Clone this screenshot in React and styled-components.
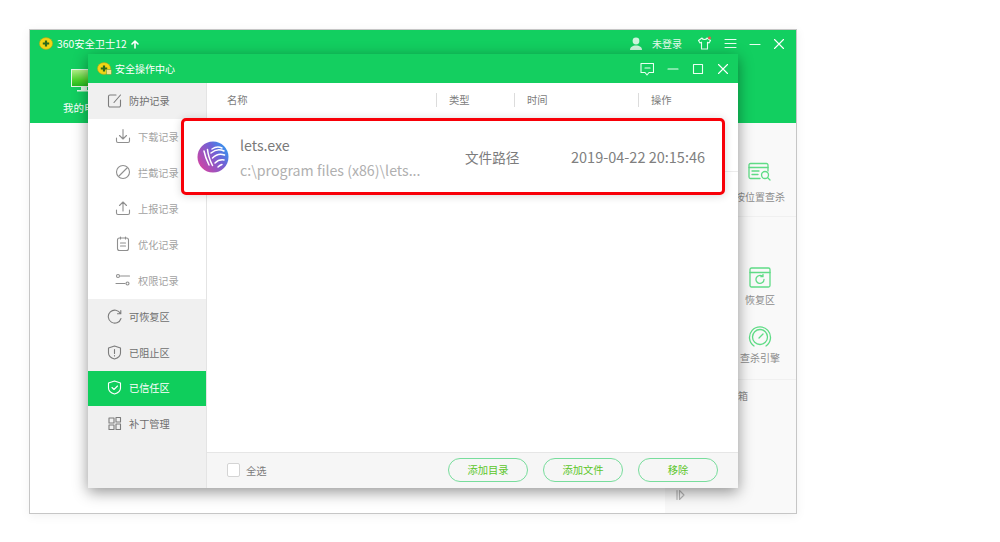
import styled, { createGlobalStyle } from "styled-components";

const GlobalStyle = createGlobalStyle`
  html, body {
    margin: 0;
    background: #fff;
    font-family: "Noto Sans CJK SC", "Noto Sans", sans-serif;
  }
`;

const Page = styled.div`
  width: 1000px;
  height: 542px;
  padding: 29px 0 0 29px;
  box-sizing: border-box;
  overflow: hidden;
`;

const Win = styled.div`
  position: relative;
  width: 768px;
  height: 485px;
  box-sizing: border-box;
  border: 1px solid #c6c6c6;
  background: #fff;
  display: flex;
  flex-direction: column;
  box-shadow: 0 2px 10px rgba(0, 0, 0, 0.06);
`;

const WinHeader = styled.header`
  height: 93px;
  flex: none;
  background: #12cf60;
  color: #fff;
  display: flex;
  flex-direction: column;
`;

const TitleRow = styled.div`
  height: 27px;
  display: flex;
  align-items: center;
  padding: 0 11px 0 9px;
  font-size: 10.3px;
`;

const AppName = styled.span`
  margin: 0 2px 0 3px;
`;

const Spacer = styled.div`
  flex: 1;
`;

const UserName = styled.span`
  margin: 0 15px 0 9px;
  font-size: 10px;
  color: #e6fbee;
`;

const WinTools = styled.div`
  display: flex;
  align-items: center;
  gap: 12px;
`;

const HomeTab = styled.div`
  width: 70px;
  margin: 12px 0 0 19px;
  display: flex;
  flex-direction: column;
  align-items: center;
  gap: 6px;
  font-size: 10.5px;
  line-height: 14px;
`;

const WinBody = styled.div`
  flex: 1;
  display: flex;
  justify-content: flex-end;
`;

const SidePanel = styled.aside`
  width: 131px;
  background: #f9f9f9;
  position: relative;
  display: flex;
  flex-direction: column;
  align-items: flex-end;
`;

const PanelGroup = styled.div`
  width: 100%;
  height: ${(p) => p.$height}px;
  box-sizing: border-box;
  padding: ${(p) => p.$top}px 11px 0 0;
  border-bottom: 1px solid #f0f0f0;
  display: flex;
  flex-direction: column;
  align-items: flex-end;
  gap: 18px;
`;

const PanelItem = styled.div`
  width: 50px;
  display: flex;
  flex-direction: column;
  align-items: center;
  gap: ${(p) => p.$gap}px;
  font-size: 10px;
  line-height: 14px;
  color: #8c8c8c;
  white-space: nowrap;
`;

const PanelExtra = styled.div`
  width: 100%;
  padding: 9px 0 0 73px;
  box-sizing: border-box;
  font-size: 10px;
  line-height: 14px;
  color: #8c8c8c;
`;

const ExpandMark = styled.div`
  margin-top: auto;
  width: 100%;
  height: 31px;
  padding-left: 10px;
  box-sizing: border-box;
`;

const Dialog = styled.section`
  position: absolute;
  left: 58px;
  top: 24px;
  width: 650px;
  height: 434px;
  display: flex;
  flex-direction: column;
  background: #fff;
  box-shadow: 0 4px 14px rgba(0, 0, 0, 0.42);
`;

const DialogTitle = styled.div`
  height: 29px;
  flex: none;
  background: #14cf60;
  color: #fff;
  font-size: 10px;
  display: flex;
  align-items: center;
  padding: 0 9px;
`;

const DialogName = styled.span`
  margin-left: 3px;
`;

const DialogTools = styled.div`
  display: flex;
  align-items: center;
  gap: 13px;
`;

const DialogBody = styled.div`
  flex: 1;
  display: flex;
  min-height: 0;
`;

const Sidebar = styled.nav`
  width: 119px;
  flex: none;
  background: #f0f0f0;
  border-right: 1px solid #e4e4e4;
  box-sizing: border-box;
  display: flex;
  flex-direction: column;
`;

const SubMenu = styled.div`
  background: #fff;
  display: flex;
  flex-direction: column;
`;

const NavRow = styled.div`
  height: ${(p) => p.$h || 36}px;
  flex: none;
  box-sizing: border-box;
  padding-bottom: 2px;
  display: flex;
  align-items: center;
  gap: 7px;
  padding-left: ${(p) => (p.$sub ? 27 : 19)}px;
  font-size: 10.2px;
  white-space: nowrap;
  background: ${(p) => (p.$active ? "#0fce5c" : "transparent")};
  color: ${(p) => (p.$active ? "#fff" : p.$sub ? "#a2a2a2" : "#6e6e6e")};
`;

const Content = styled.div`
  flex: 1;
  display: flex;
  flex-direction: column;
  min-width: 0;
`;

const TableHead = styled.div`
  height: 36px;
  flex: none;
  display: grid;
  grid-template-columns: 229px 78px 124px 1fr;
  align-items: center;
  font-size: 10.3px;
  color: #7c7c7c;
`;

const HeadCell = styled.div`
  height: 14px;
  line-height: 14px;
  padding-left: ${(p) => (p.$first ? 20 : 12)}px;
  border-left: ${(p) => (p.$first ? "none" : "1px solid #dcdcdc")};
  transform: translateY(-1px);
`;

const RowArea = styled.div`
  flex: 1;
  background: #fff;
`;

const RowLine = styled.div`
  height: 52px;
  border-bottom: 1px solid #ececec;
`;

const Footer = styled.footer`
  height: 36px;
  flex: none;
  background: #f6f6f6;
  border-top: 1px solid #e6e6e6;
  box-sizing: border-box;
  display: flex;
  align-items: center;
  padding: 0 20px 1px;
  gap: 15px;
`;

const SelectAll = styled.label`
  display: flex;
  align-items: center;
  gap: 6px;
  font-size: 10.3px;
  color: #7c7c7c;
  margin-right: auto;
`;

const Check = styled.span`
  width: 13px;
  height: 14px;
  box-sizing: border-box;
  background: #fff;
  border: 1px solid #d4d4d4;
  border-radius: 2px;
`;

const GreenButton = styled.button`
  width: 80px;
  height: 24px;
  padding: 0 0 2px;
  border: 1px solid #78dd9c;
  border-radius: 12px;
  background: transparent;
  color: #5cc62a;
  font: inherit;
  font-size: 10.3px;
`;

const Highlight = styled.div`
  position: absolute;
  left: 93px;
  top: 64px;
  width: 544px;
  height: 77px;
  box-sizing: border-box;
  border: 3px solid #f80008;
  border-radius: 5px;
  background: #fff;
  box-shadow: 0 1px 8px rgba(0, 0, 0, 0.16);
  display: flex;
  align-items: center;
  padding-left: 13px;
`;

const FileInfo = styled.div`
  width: 225px;
  margin-left: 11px;
  padding-top: 2px;
  display: flex;
  flex-direction: column;
  gap: 5px;
  font-size: 14.2px;
  line-height: 20px;
`;

const FileName = styled.div`
  color: #7a7a7a;
`;

const FilePath = styled.div`
  color: #b0b0b0;
  white-space: nowrap;
`;

const FileType = styled.div`
  width: 106px;
  font-size: 13.6px;
  color: #7c7c7c;
`;

const FileTime = styled.div`
  font-size: 14.5px;
  color: #808080;
  white-space: nowrap;
`;

const Ico = ({ s = 16, w, h, c = "#8f8f8f", sw = 1.1, children }) => (
  <svg
    width={w || s}
    height={h || s}
    viewBox={`0 0 ${w || s} ${h || s}`}
    fill="none"
    stroke={c}
    strokeWidth={sw}
    strokeLinecap="round"
    strokeLinejoin="round"
    style={{ flex: "none" }}
  >
    {children}
  </svg>
);

const Logo360 = ({ lock }) => (
  <svg width="15" height="13" viewBox="0 0 15 13" style={{ flex: "none" }}>
    <ellipse cx="7" cy="6.5" rx="6.6" ry="5.9" fill="#f2d515" stroke="#a9a41a" strokeWidth="0.6" />
    <path d="M3.8 6.5h6.4M7 3.500v6" stroke="#2c6a1c" strokeWidth="2.200" />
    {lock && <rect x="9.5" y="7.5" width="5" height="5" rx="1" fill="#f3e38a" stroke="#6e9a35" strokeWidth="0.6" />}
  </svg>
);

const LetsLogo = () => (
  <svg width="32" height="32" viewBox="0 0 32 32" style={{ flex: "none" }}>
    <defs>
      <linearGradient id="letsBg" x1="0.95" y1="0.1" x2="0.05" y2="0.75">
        <stop offset="0" stopColor="#2c9cf2" />
        <stop offset="0.4" stopColor="#6f62d6" />
        <stop offset="1" stopColor="#cc45a6" />
      </linearGradient>
    </defs>
    <circle cx="16" cy="16" r="15.500" fill="url(#letsBg)" />
    <g fill="none" stroke="#fff" strokeWidth="1.500" strokeLinecap="round">
      <path d="M7 10c1 5 2.500 9 5 14" />
      <path d="M10.500 8.500c.5 5 2 10 5 16" />
      <path d="M14 12c4-3.500 9-4 13-2" />
      <path d="M15.500 17c3.500-3.500 8-4.500 12-3" />
      <path d="M18 22c2.500-2.500 6-3.500 9-3" />
      <path d="M15 8c3-2 7-2.500 10-1" />
      <path d="M21 26c1-1 2.500-2 4-2.500" />
    </g>
  </svg>
);

const subRows = [
  {
    label: "下载记录",
    icon: (
      <>
        <path d="M8 1.5v9M4.5 7.5 8 11l3.5-3.5" />
        <path d="M1.5 10v3a1.5 1.5 0 0 0 1.5 1.5h10a1.5 1.5 0 0 0 1.5-1.5v-3" />
      </>
    ),
  },
  {
    label: "拦截记录",
    icon: (
      <>
        <circle cx="8" cy="8" r="6.5" />
        <path d="M4 12 12 4" />
      </>
    ),
  },
  {
    label: "上报记录",
    icon: (
      <>
        <path d="M8 11V2M4.5 5.5 8 2l3.5 3.5" />
        <path d="M1.5 10v3a1.5 1.5 0 0 0 1.5 1.5h10a1.5 1.5 0 0 0 1.5-1.5v-3" />
      </>
    ),
  },
  {
    label: "优化记录",
    icon: (
      <>
        <rect x="2.5" y="2" width="11" height="12.5" rx="2" />
        <path d="M5.5 1v2M10.5 1v2M5.5 7h5M5.5 10h5" />
      </>
    ),
  },
  {
    label: "权限记录",
    icon: (
      <>
        <circle cx="3" cy="4" r="1.5" />
        <path d="M5.5 4h9M1 11.5h9" />
        <circle cx="12.5" cy="11.5" r="1.5" />
      </>
    ),
  },
];

export default function App() {
  return (
    <Page>
      <GlobalStyle />
      <Win>
        <WinHeader>
          <TitleRow>
            <Logo360 />
            <AppName>360安全卫士12</AppName>
            <Ico s={10} c="#fff" sw={1.6}>
              <path d="M5 9V2M2 5l3-3 3 3" transform="translate(1 0)" />
            </Ico>
            <Spacer />
            <svg width="14" height="14" viewBox="0 0 14 14" fill="#cdf5dc">
              <circle cx="7" cy="4" r="3.4" />
              <path d="M1 13c0-3 2.5-4.5 6-4.5s6 1.5 6 4.5z" />
            </svg>
            <UserName>未登录</UserName>
            <WinTools>
              <Ico s={15} c="#eafff1">
                <path d="M5 2 1.5 4.5 3 7l1.5-.8V13h6V6.200l1.500.8 1.500-2.500L10 2c-.5 2-4.500 2-5 0z" />
                <circle cx="12.500" cy="2" r="1.400" fill="#f2504b" stroke="none" />
              </Ico>
              <Ico s={13} c="#eafff1">
                <path d="M1 2.500h11M1 6.500h11M1 10.500h11" />
              </Ico>
              <Ico s={12} c="#eafff1">
                <path d="M1 6.500h10" />
              </Ico>
              <Ico s={12} c="#fff">
                <path d="M1.500 1.500l9 9M10.500 1.500l-9 9" />
              </Ico>
            </WinTools>
          </TitleRow>
          <HomeTab>
            <svg width="36" height="26" viewBox="0 0 36 26">
              <defs>
                <linearGradient id="screenFill" x1="0" y1="0" x2="0" y2="1">
                  <stop offset="0" stopColor="#b5f08c" />
                  <stop offset="0.6" stopColor="#4fd52e" />
                  <stop offset="1" stopColor="#22b91f" />
                </linearGradient>
              </defs>
              <rect x="5.500" y="0.500" width="25" height="17" fill="url(#screenFill)" stroke="#e3f9e6" />
              <path d="M15 18h6v3h-6zM11 21h14v1.500H11z" fill="#e3f9e6" />
            </svg>
            我的电脑
          </HomeTab>
        </WinHeader>
        <WinBody>
          <SidePanel>
            <PanelGroup $height={94} $top={39}>
              <PanelItem $gap={8}>
                <Ico w={24} h={20} c="#5fdc86" sw={1.3}>
                  <path d="M20 9V3a1.500 1.500 0 0 0-1.500-1.500h-16A1.500 1.500 0 0 0 1 3v12a1.500 1.500 0 0 0 1.500 1.500H12" />
                  <path d="M1 5.500h19M4 9h7M4 12.500h6" />
                  <circle cx="17" cy="13" r="3.500" />
                  <path d="m19.500 15.500 2.500 2.500" />
                </Ico>
                按位置查杀
              </PanelItem>
            </PanelGroup>
            <PanelGroup $height={163} $top={50}>
              <PanelItem $gap={5}>
                <Ico w={22} h={21} c="#5fdc86" sw={1.3}>
                  <rect x="1" y="1" width="20" height="19" rx="1.500" />
                  <path d="M1 5.500h20" />
                  <path d="M15 12.500a4 4 0 1 1-1.500-3.200M14 7.500v2.200h-2.200" />
                </Ico>
                恢复区
              </PanelItem>
              <PanelItem $gap={2}>
                <Ico w={24} h={24} c="#5fdc86" sw={1.3}>
                  <path d="M6 21a10.500 10.500 0 1 1 12 0" />
                  <circle cx="12" cy="12" r="7.500" />
                  <path d="m11 13 4-4" />
                </Ico>
                查杀引擎
              </PanelItem>
            </PanelGroup>
            <PanelExtra>箱</PanelExtra>
            <ExpandMark>
              <Ico s={12} c="#b5b5b5">
                <path d="M2 1.500v9M4.500 1.500 9 6l-4.500 4.500z" />
              </Ico>
            </ExpandMark>
          </SidePanel>
        </WinBody>

        <Dialog>
          <DialogTitle>
            <Logo360 lock />
            <DialogName>安全操作中心</DialogName>
            <Spacer />
            <DialogTools>
              <Ico w={14} h={14} c="#eafff1">
                <path d="M1 1.500h12.500v9H9L7 13l-2-2.500H1z" />
                <path d="M5 6h5" />
              </Ico>
              <Ico s={12} c="#eafff1">
                <path d="M1 6h10" />
              </Ico>
              <Ico s={12} c="#eafff1">
                <rect x="1.500" y="1.500" width="9" height="9" />
              </Ico>
              <Ico s={12} c="#fff">
                <path d="M1.500 1.500l9 9M10.500 1.500l-9 9" />
              </Ico>
            </DialogTools>
          </DialogTitle>
          <DialogBody>
            <Sidebar>
              <NavRow>
                <Ico s={15} c="#7c7c7c">
                  <path d="M13.500 7v5.500a1.500 1.500 0 0 1-1.500 1.500H3a1.500 1.500 0 0 1-1.500-1.500v-9A1.500 1.500 0 0 1 3 2h6" />
                  <path d="M7 9.500 13.500 2" />
                </Ico>
                防护记录
              </NavRow>
              <SubMenu>
                {subRows.map((row) => (
                  <NavRow $sub key={row.label}>
                    <Ico>{row.icon}</Ico>
                    {row.label}
                  </NavRow>
                ))}
              </SubMenu>
              <NavRow>
                <Ico s={15} c="#7c7c7c">
                  <path d="M13.500 4.500A6.500 6.500 0 1 0 14 9.500M13.800 1.500v3.300h-3.300" />
                </Ico>
                可恢复区
              </NavRow>
              <NavRow>
                <Ico s={15} c="#7c7c7c">
                  <path d="M7.500 1 13.500 3v5c0 3-2.500 5-6 6-3.500-1-6-3-6-6V3z" />
                  <path d="M7.500 4.500v4M7.500 10.500v.5" />
                </Ico>
                已阻止区
              </NavRow>
              <NavRow $active $h={35}>
                <Ico s={15} c="#fff">
                  <path d="M7.500 1 13.500 3v5c0 3-2.500 5-6 6-3.500-1-6-3-6-6V3z" />
                  <path d="m5 7.500 2 2 3.500-3.500" />
                </Ico>
                已信任区
              </NavRow>
              <NavRow>
                <Ico s={15} c="#7c7c7c">
                  <rect x="2" y="2" width="5" height="5" />
                  <rect x="9" y="1.500" width="4.500" height="4.500" />
                  <rect x="2" y="9" width="5" height="4.500" />
                  <rect x="9" y="8" width="4.500" height="5.500" />
                </Ico>
                补丁管理
              </NavRow>
            </Sidebar>
            <Content>
              <TableHead>
                <HeadCell $first>名称</HeadCell>
                <HeadCell>类型</HeadCell>
                <HeadCell>时间</HeadCell>
                <HeadCell>操作</HeadCell>
              </TableHead>
              <RowArea>
                <RowLine />
              </RowArea>
              <Footer>
                <SelectAll>
                  <Check />
                  全选
                </SelectAll>
                <GreenButton>添加目录</GreenButton>
                <GreenButton>添加文件</GreenButton>
                <GreenButton>移除</GreenButton>
              </Footer>
            </Content>
          </DialogBody>
          <Highlight>
            <LetsLogo />
            <FileInfo>
              <FileName>lets.exe</FileName>
              <FilePath>c:\program files (x86)\lets...</FilePath>
            </FileInfo>
            <FileType>文件路径</FileType>
            <FileTime>2019-04-22 20:15:46</FileTime>
          </Highlight>
        </Dialog>
      </Win>
    </Page>
  );
}
